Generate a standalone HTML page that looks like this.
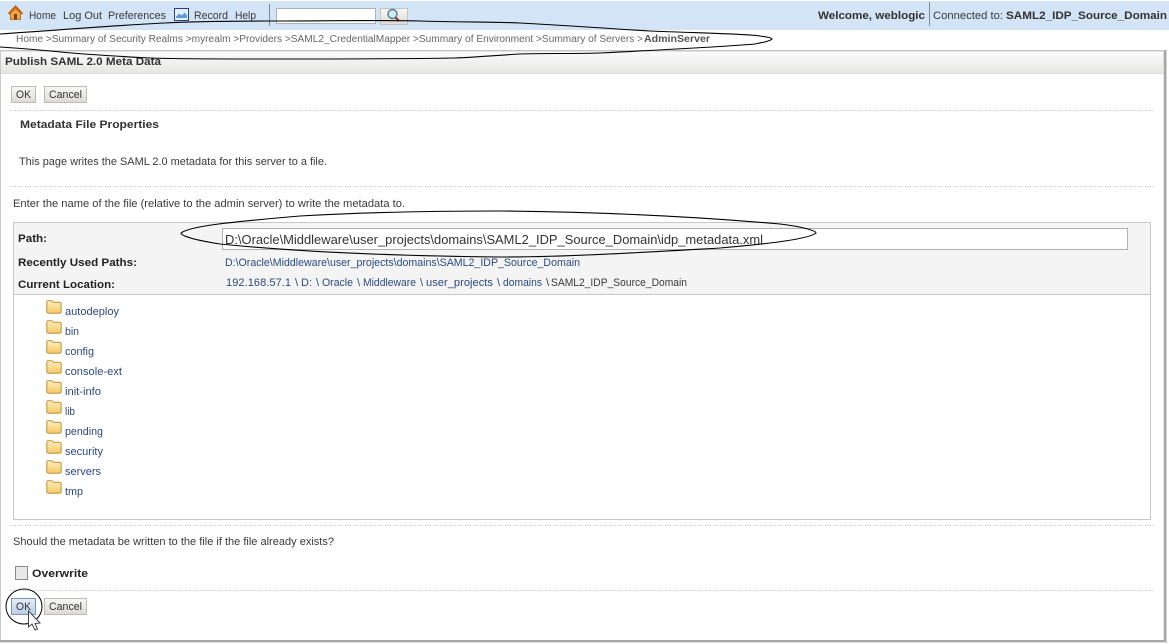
<!DOCTYPE html>
<html><head><meta charset="utf-8"><title>Publish SAML 2.0 Meta Data</title>
<style>
html,body{margin:0;padding:0;background:#fff;width:1169px;height:644px;overflow:hidden}
svg{display:block}
text{font-family:"Liberation Sans",Arial,sans-serif;font-size:11px;fill:#333;white-space:pre}
.b{font-weight:bold}
.l{fill:#2b4a80}
.n{fill:#3a3a3a}
.c{fill:#666}
.btn{fill:#333;font-size:11px}
</style></head><body>
<svg width="1169" height="644" viewBox="0 0 1169 644" xmlns="http://www.w3.org/2000/svg">
<defs>
<linearGradient id="hd" x1="0" y1="0" x2="0" y2="1"><stop offset="0" stop-color="#fbfbfb"/><stop offset="1" stop-color="#e6e6e4"/></linearGradient>
<linearGradient id="bt" x1="0" y1="0" x2="0" y2="1"><stop offset="0" stop-color="#f8f8f6"/><stop offset="1" stop-color="#dcdbd6"/></linearGradient>
<linearGradient id="bt2" x1="0" y1="0" x2="0" y2="1"><stop offset="0" stop-color="#e6eff9"/><stop offset="1" stop-color="#b9cde6"/></linearGradient>
<linearGradient id="fo" x1="0" y1="0" x2="0" y2="1"><stop offset="0" stop-color="#fdf0c0"/><stop offset="1" stop-color="#f4c766"/></linearGradient>
<symbol id="folder" viewBox="0 0 16 14" overflow="visible">
<path d="M.8 3.500V2.200Q.8 .8 2.200 .8H5.500Q6.800 .8 7.200 2.200H13.400Q15.200 2.200 15.200 4V11.400Q15.200 13.200 13.400 13.200H2.600Q.8 13.200 .8 11.400Z" fill="url(#fo)" stroke="#c0923a" stroke-width="1"/>
</symbol>
</defs>

<!-- top bar -->
<rect x="0" y="1" width="1169" height="29" fill="#d3e4f7"/>
<path d="M8.500 14 15.500 6.500 22.500 14" fill="none" stroke="#c8620e" stroke-width="2"/>
<path d="M10.500 13V19.500H20.500V13L15.500 8Z" fill="#f0a244" stroke="#a8601a" stroke-width=".8"/>
<rect x="14" y="14" width="3" height="5.500" fill="#7a3c0c"/>
<text x="29" y="19" textLength="27" lengthAdjust="spacingAndGlyphs" class="n">Home</text>
<text x="63" y="19" textLength="39" lengthAdjust="spacingAndGlyphs" class="n">Log Out</text>
<text x="108" y="19" textLength="58" lengthAdjust="spacingAndGlyphs" class="n">Preferences</text>
<rect x="174.500" y="8.500" width="14" height="12" fill="#e4effa" stroke="#26457e"/>
<path d="M176 17 179 13.500 182 15.500 184.500 12.500 187 15V18H176Z" fill="#5a9ae0"/>
<text x="194" y="19" textLength="34" lengthAdjust="spacingAndGlyphs" class="n">Record</text>
<text x="235" y="19" textLength="21" lengthAdjust="spacingAndGlyphs" class="n">Help</text>
<rect x="269" y="4" width="1" height="22" fill="#7d8a98"/>
<rect x="276.500" y="8.500" width="99" height="15" fill="#fff" stroke="#aab2ba"/>
<rect x="380.500" y="8.500" width="27" height="16" fill="url(#bt)" stroke="#c4c2bb"/>
<circle cx="392.500" cy="14" r="4.500" fill="#cfeaf0" stroke="#4c7f8e" stroke-width="1.400"/>
<path d="M395.500 17.500 399 21" stroke="#9c2f28" stroke-width="2.200"/>
<text x="818" y="19" textLength="107" lengthAdjust="spacingAndGlyphs" class="b" style="fill:#333">Welcome, weblogic</text>
<rect x="929" y="2" width="1" height="24" fill="#7d8a98"/>
<text x="933" y="19" textLength="70" lengthAdjust="spacingAndGlyphs" class="n">Connected to:</text>
<text x="1006" y="19" textLength="161" lengthAdjust="spacingAndGlyphs" class="b">SAML2_IDP_Source_Domain</text>

<!-- breadcrumb -->
<text x="16" y="42" textLength="627" lengthAdjust="spacingAndGlyphs" style="font-size:10px" class="c">Home &gt;Summary of Security Realms &gt;myrealm &gt;Providers &gt;SAML2_CredentialMapper &gt;Summary of Environment &gt;Summary of Servers &gt;</text>
<text x="644" y="42" textLength="66" lengthAdjust="spacingAndGlyphs" style="font-size:10px;fill:#555" class="b">AdminServer</text>

<!-- panel -->
<rect x="1" y="51" width="1164" height="589" fill="#fff"/>
<rect x="1" y="52" width="1163" height="21" fill="url(#hd)"/>
<rect x="0" y="50" width="1164" height="1.500" fill="#c4c4c4"/>
<rect x="1" y="73" width="1163" height="1" fill="#dcdcda"/>
<rect x="0" y="50" width="1" height="591" fill="#c9c9c9"/>
<rect x="1163.500" y="50" width="1" height="591" fill="#d0d0d0"/>
<rect x="1164" y="50" width="2.500" height="592" fill="#a6a6a6"/>
<rect x="0" y="640" width="1166" height="2" fill="#a6a6a6"/>
<rect x="0" y="642" width="1168" height="1" fill="#dedede"/>
<text x="5" y="65" textLength="156" lengthAdjust="spacingAndGlyphs" class="b" style="fill:#333">Publish SAML 2.0 Meta Data</text>

<!-- buttons top -->
<rect x="11.500" y="86.500" width="24" height="16" fill="url(#bt)" stroke="#bdbbb4"/>
<text x="16" y="98" textLength="15" lengthAdjust="spacingAndGlyphs" class="btn">OK</text>
<rect x="44.500" y="86.500" width="42" height="16" fill="url(#bt)" stroke="#bdbbb4"/>
<text x="49" y="98" textLength="33" lengthAdjust="spacingAndGlyphs" class="btn">Cancel</text>

<path d="M10 110.500H1154M10 186.500H1154M10 525.500H1154M10 590.500H1154" stroke="#bcbcbc" stroke-dasharray="1 1.500" fill="none"/>

<text x="20" y="128" textLength="139" lengthAdjust="spacingAndGlyphs" class="b">Metadata File Properties</text>
<text x="19" y="165" textLength="308" lengthAdjust="spacingAndGlyphs" class="n">This page writes the SAML 2.0 metadata for this server to a file.</text>
<text x="13" y="207" textLength="392" lengthAdjust="spacingAndGlyphs" class="n">Enter the name of the file (relative to the admin server) to write the metadata to.</text>

<!-- chooser -->
<rect x="13.500" y="222.500" width="1137" height="297" fill="#fff" stroke="#c8c8c8"/>
<rect x="14" y="223" width="1136" height="71" fill="#f4f4f4"/>
<rect x="14" y="294" width="1136" height="1" fill="#c8c8c8"/>
<text x="18" y="242" textLength="29" lengthAdjust="spacingAndGlyphs" class="b" style="fill:#222">Path:</text>
<rect x="222.500" y="228.500" width="905" height="21" fill="#fff" stroke="#b0b0b0"/>
<text x="225" y="244" textLength="538" lengthAdjust="spacingAndGlyphs" style="font-size:13px;fill:#333">D:\Oracle\Middleware\user_projects\domains\SAML2_IDP_Source_Domain\idp_metadata.xml</text>
<text x="18" y="266" textLength="119" lengthAdjust="spacingAndGlyphs" class="b" style="fill:#222">Recently Used Paths:</text>
<text x="225" y="266" textLength="355" lengthAdjust="spacingAndGlyphs" class="l" style="font-size:11px">D:\Oracle\Middleware\user_projects\domains\SAML2_IDP_Source_Domain</text>
<text x="18" y="288" textLength="97" lengthAdjust="spacingAndGlyphs" class="b" style="fill:#222">Current Location:</text>
<text x="226" y="286" textLength="65" class="l">192.168.57.1</text>
<text x="295" y="286" class="l">\</text>
<text x="301" y="286" textLength="11" lengthAdjust="spacingAndGlyphs" class="l">D:</text>
<text x="316" y="286" class="l">\</text>
<text x="322" y="286" textLength="31" lengthAdjust="spacingAndGlyphs" class="l">Oracle</text>
<text x="357" y="286" class="l">\</text>
<text x="363" y="286" textLength="53" lengthAdjust="spacingAndGlyphs" class="l">Middleware</text>
<text x="420" y="286" class="l">\</text>
<text x="426" y="286" textLength="67" lengthAdjust="spacingAndGlyphs" class="l">user_projects</text>
<text x="497" y="286" class="l">\</text>
<text x="503" y="286" textLength="39" lengthAdjust="spacingAndGlyphs" class="l">domains</text>
<text x="546" y="286" class="n">\</text>
<text x="551" y="286" textLength="136" lengthAdjust="spacingAndGlyphs" class="n">SAML2_IDP_Source_Domain</text>

<!-- folders -->
<use href="#folder" x="46" y="300" width="16" height="14"/><text x="65" y="315" textLength="54" lengthAdjust="spacingAndGlyphs" class="l">autodeploy</text>
<use href="#folder" x="46" y="320" width="16" height="14"/><text x="65" y="335" textLength="14" lengthAdjust="spacingAndGlyphs" class="l">bin</text>
<use href="#folder" x="46" y="340" width="16" height="14"/><text x="65" y="355" textLength="29" lengthAdjust="spacingAndGlyphs" class="l">config</text>
<use href="#folder" x="46" y="360" width="16" height="14"/><text x="65" y="375" textLength="57" lengthAdjust="spacingAndGlyphs" class="l">console-ext</text>
<use href="#folder" x="46" y="380" width="16" height="14"/><text x="65" y="395" textLength="36" lengthAdjust="spacingAndGlyphs" class="l">init-info</text>
<use href="#folder" x="46" y="400" width="16" height="14"/><text x="65" y="415" textLength="10" lengthAdjust="spacingAndGlyphs" class="l">lib</text>
<use href="#folder" x="46" y="420" width="16" height="14"/><text x="65" y="435" textLength="38" lengthAdjust="spacingAndGlyphs" class="l">pending</text>
<use href="#folder" x="46" y="440" width="16" height="14"/><text x="65" y="455" textLength="38" lengthAdjust="spacingAndGlyphs" class="l">security</text>
<use href="#folder" x="46" y="460" width="16" height="14"/><text x="65" y="475" textLength="36" lengthAdjust="spacingAndGlyphs" class="l">servers</text>
<use href="#folder" x="46" y="480" width="16" height="14"/><text x="65" y="495" textLength="18" lengthAdjust="spacingAndGlyphs" class="l">tmp</text>

<text x="13" y="545" textLength="321" lengthAdjust="spacingAndGlyphs" class="n">Should the metadata be written to the file if the file already exists?</text>
<rect x="15.500" y="566.500" width="12" height="13" fill="#e8e8e8" stroke="#8a8a8a"/>
<text x="32" y="577" textLength="56" lengthAdjust="spacingAndGlyphs" class="b" style="fill:#222">Overwrite</text>

<!-- bottom buttons -->
<rect x="11.500" y="598.500" width="24" height="16" fill="url(#bt2)" stroke="#7b93b2"/>
<text x="16" y="610" textLength="15" lengthAdjust="spacingAndGlyphs" class="btn">OK</text>
<rect x="44.500" y="598.500" width="42" height="16" fill="url(#bt)" stroke="#bdbbb4"/>
<text x="49" y="610" textLength="33" lengthAdjust="spacingAndGlyphs" class="btn">Cancel</text>

<!-- annotations -->
<path d="M0 34C60 30 120 25 165 23 200 21 240 21 270 21 320 21 380 20 420 21 450 22 500 22 520 23 560 25 600 28 650 31 700 33 750 34 760 36 768 37 772 38 772 39 770 41 765 42 755 44 720 47 660 50 600 53 570 54 545 53 520 54 500 55 480 57 455 58 400 59 330 59 270 59 220 59 180 59 150 58 110 56 70 53 50 51 30 49 15 48 0 47" fill="none" stroke="#000" stroke-width="1.100"/>
<path d="M181 233C190 226 230 222 300 216 370 212 430 211 500 211 600 212 700 217 780 224 805 227 816 231 816 233 810 238 780 243 720 248 650 252 570 257 500 257 400 256 300 252 220 244 195 240 181 236 181 233Z" fill="none" stroke="#000" stroke-width="1.100"/>
<ellipse cx="24" cy="606.500" rx="18" ry="17.500" fill="none" stroke="#000" stroke-width="1"/>
<path d="M28.500 611V627L32 624 35 630 37.500 629 35 623.500 40 623Z" fill="#fff" stroke="#444" stroke-width="1"/>
</svg>
</body></html>
